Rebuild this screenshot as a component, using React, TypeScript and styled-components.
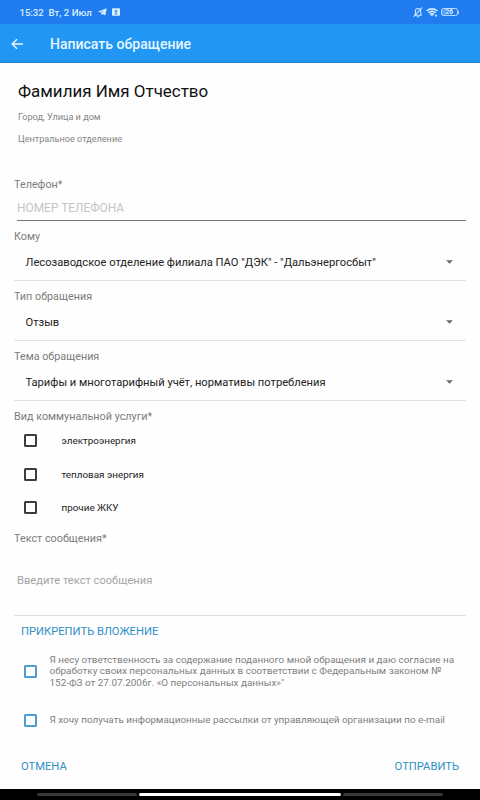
import React from "react";
import styled, { createGlobalStyle } from "styled-components";

const GlobalStyle = createGlobalStyle`
  *, *::before, *::after { box-sizing: border-box; }
  body {
    margin: 0;
    background: #fff;
    font-family: Roboto, "Noto Sans", sans-serif;
  }
  button, input, textarea { font-family: inherit; }
`;

const Screen = styled.div`
  display: flex;
  flex-direction: column;
  width: 480px;
  height: 800px;
  overflow: hidden;
  background: #fefefe;
`;

const StatusBar = styled.div`
  display: flex;
  align-items: center;
  flex: none;
  height: 24px;
  padding: 0 21px 0 19.5px;
  background: #217cf0;
  color: #d9efff;
  font-size: 9.6px;
  font-weight: 500;
`;

const Clock = styled.span`
  width: 29px;
  font-size: 9.5px;
`;

const StatusIcons = styled.div<{ $end?: boolean }>`
  display: flex;
  align-items: center;
  gap: ${(p) => (p.$end ? 3 : 5)}px;
  margin-left: ${(p) => (p.$end ? "auto" : "6px")};
  svg { display: block; }
`;

const AppBar = styled.header`
  display: flex;
  align-items: center;
  flex: none;
  height: 39px;
  padding: 1px 10px 0;
  background: #2196f3;
  border-bottom: 1px solid #2583cd;
`;

const BackButton = styled.button`
  display: flex;
  width: 40px;
  padding: 0;
  border: 0;
  background: none;
`;

const Title = styled.h1`
  margin: 0;
  color: #e6f7ff;
  font-size: 14.04px;
  font-weight: 500;
  line-height: 20px;
`;

const Profile = styled.section`
  flex: none;
  height: 111px;
  padding: 17px 18px 0;
`;

const Name = styled.div`
  margin-bottom: 5px;
  color: #111;
  font-size: 16.95px;
  line-height: 22px;
`;

const Detail = styled.div`
  color: #858585;
  font-size: 9.15px;
  line-height: 21.5px;
`;

const Form = styled.form`
  display: flex;
  flex-direction: column;
  flex: 1;
  padding: 0 14px;
`;

const Label = styled.label<{ $height?: number }>`
  display: block;
  flex: none;
  height: ${(p) => p.$height ?? 20}px;
  padding-top: 1px;
  color: #7c7c7c;
  font-size: 10.8px;
  line-height: 20px;
`;

const PhoneInput = styled.input`
  flex: none;
  height: 27px;
  margin: 0 0 5px 3px;
  padding: 1px 0 0;
  border: 0;
  border-bottom: 1px solid #777;
  background: none;
  outline: none;
  font-size: 11.93px;
  &::placeholder { color: #c5c5c5; opacity: 1; }
`;

const Select = styled.div`
  display: flex;
  align-items: center;
  justify-content: space-between;
  flex: none;
  height: 35px;
  margin-bottom: 5px;
  padding: 0 13.5px 2px 11.5px;
  border-bottom: 1px solid #e2e2e2;
  color: #222;
  font-size: 11.16px;
  svg { display: block; }
`;

const Services = styled.div`
  display: flex;
  flex-direction: column;
  flex: none;
  height: 104px;
`;

const ServiceOption = styled.label`
  display: flex;
  align-items: center;
  gap: 24.5px;
  height: 33.5px;
  padding-left: 10px;
  color: #222;
  font-size: 9.87px;
`;

const Box = styled.span<{ $accent?: boolean }>`
  flex: none;
  width: 13px;
  height: 13px;
  border: 2px solid ${(p) => (p.$accent ? "#4c9ed0" : "#3d3d3d")};
  border-radius: 1.5px;
`;

const Message = styled.textarea`
  flex: none;
  height: 67px;
  padding: 22px 3px 0;
  border: 0;
  border-bottom: 1px solid #dedede;
  background: none;
  outline: none;
  resize: none;
  font-size: 11.14px;
  line-height: 20px;
  &::placeholder { color: #a4a4a4; opacity: 1; }
`;

const TextButton = styled.button`
  flex: none;
  padding: 0;
  border: 0;
  background: none;
  color: #2f8fc4;
  font-size: 11.2px;
  line-height: 20px;
  text-align: left;
`;

const AttachRow = styled.div`
  flex: none;
  height: 32px;
  padding: 4px 7px 0;
`;

const Consent = styled.label<{ $height: number }>`
  display: flex;
  align-items: center;
  flex: none;
  gap: 12.5px;
  height: ${(p) => p.$height}px;
  padding-left: 10px;
  color: #7e7e7e;
  font-size: 9.92px;
  line-height: 11.4px;
  white-space: nowrap;
`;

const Actions = styled.div`
  display: flex;
  justify-content: space-between;
  margin-top: 11px;
  padding: 0 7px;
`;

const NavBar = styled.div`
  display: flex;
  justify-content: center;
  flex: none;
  gap: 2px;
  height: 11px;
  padding-top: 4px;
  background: #000;
`;

const NavSegment = styled.span<{ $active?: boolean }>`
  width: ${(p) => (p.$active ? 202 : 100)}px;
  height: 3px;
  border-radius: 1.5px;
  background: ${(p) => (p.$active ? "#fff" : "#383838")};
`;

const Caret = () => (
  <svg width="7" height="4" viewBox="0 0 7 4">
    <path d="M0.2 0.2h6.6L3.5 3.8z" fill="#686868" />
  </svg>
);

const BackArrow = () => (
  <svg width="14" height="12" viewBox="0 0 14 12" fill="none" stroke="#e6f7ff" strokeWidth="1.5">
    <path d="M13 6H2.4M7 1.2L2.2 6L7 10.8" />
  </svg>
);

const TelegramIcon = () => (
  <svg width="9" height="8" viewBox="0 0 9 8" fill="#d9efff">
    <path d="M8.8 0.2L7.2 7.6L4.6 5.9L3.4 7.1L3 4.9L6.2 2.2L2.2 4.5L0 3.6z" />
  </svg>
);

const BadgeIcon = () => (
  <svg width="8" height="8" viewBox="0 0 8 8">
    <rect x="0" y="0.2" width="8" height="7.6" rx="0.8" fill="#d9efff" />
    <path d="M4 1.5v4.5M2.4 3.2h3.2M2.8 6h2.4" stroke="#3587ee" strokeWidth="0.9" />
  </svg>
);

const MutedBell = () => (
  <svg width="10" height="11" viewBox="0 0 10 11" fill="none" stroke="#c5e4ff" strokeWidth="1.1" strokeLinecap="round" strokeLinejoin="round">
    <path d="M1.6 8.3h6.9L7.7 6.9V4.2C7.7 2.6 6.7 1.5 5 1.5S2.4 2.6 2.4 4.2v2.7zM4.2 9.8h1.6M8.8 0.9L1 9.3" />
  </svg>
);

const WifiIcon = () => (
  <svg width="12" height="9" viewBox="0 0 12 9" fill="none" stroke="#d0eaff" strokeWidth="1.6">
    <path d="M0.6 3C3.7 0.1 8.3 0.1 11.4 3M2.4 5C4.5 3.1 7.5 3.1 9.6 5M4.1 6.8c1.1-1 2.7-1 3.8 0" />
    <path d="M4.8 7.2h2.4L6 8.6z" fill="#d0eaff" stroke="none" />
    <path d="M9.2 7.6h1.8" />
  </svg>
);

const Battery = styled.span`
  display: flex;
  align-items: center;
`;

const BatteryLevel = styled.span`
  display: flex;
  align-items: center;
  justify-content: center;
  width: 16.5px;
  height: 8px;
  border: 1px solid #b9dcff;
  border-radius: 2.5px;
  background: linear-gradient(90deg, #5ca2f6 30%, transparent 30%);
  color: #e4f3ff;
  font-size: 6.5px;
  font-weight: 700;
  line-height: 6px;
`;

const BatteryTip = styled.span`
  width: 1.5px;
  height: 3px;
  border-radius: 0 1px 1px 0;
  background: #b9dcff;
`;

const fields = [
  { label: "Кому", value: 'Лесозаводское отделение филиала ПАО "ДЭК" - "Дальэнергосбыт"' },
  { label: "Тип обращения", value: "Отзыв" },
  { label: "Тема обращения", value: "Тарифы и многотарифный учёт, нормативы потребления" },
];

const services = ["электроэнергия", "тепловая энергия", "прочие ЖКУ"];

export default function App() {
  return (
    <>
      <GlobalStyle />
      <Screen>
        <StatusBar>
          <Clock>15:32</Clock>
          <span>Вт, 2 Июл</span>
          <StatusIcons>
            <TelegramIcon />
            <BadgeIcon />
          </StatusIcons>
          <StatusIcons $end>
            <MutedBell />
            <WifiIcon />
            <Battery>
              <BatteryLevel>26</BatteryLevel>
              <BatteryTip />
            </Battery>
          </StatusIcons>
        </StatusBar>
        <AppBar>
          <BackButton aria-label="Назад"><BackArrow /></BackButton>
          <Title>Написать обращение</Title>
        </AppBar>
        <Profile>
          <Name>Фамилия Имя Отчество</Name>
          <Detail>Город, Улица и дом</Detail>
          <Detail>Центральное отделение</Detail>
        </Profile>
        <Form>
          <Label htmlFor="phone">Телефон*</Label>
          <PhoneInput id="phone" placeholder="НОМЕР ТЕЛЕФОНА" />
          {fields.map((field) => (
            <React.Fragment key={field.label}>
              <Label as="div">{field.label}</Label>
              <Select>
                <span>{field.value}</span>
                <Caret />
              </Select>
            </React.Fragment>
          ))}
          <Label as="div" $height={18}>Вид коммунальной услуги*</Label>
          <Services>
            {services.map((service) => (
              <ServiceOption key={service}>
                <Box />
                {service}
              </ServiceOption>
            ))}
          </Services>
          <Label htmlFor="message" $height={21}>Текст сообщения*</Label>
          <Message id="message" placeholder="Введите текст сообщения" />
          <AttachRow>
            <TextButton type="button">ПРИКРЕПИТЬ ВЛОЖЕНИЕ</TextButton>
          </AttachRow>
          <Consent $height={46}>
            <Box $accent />
            <span>
              Я несу ответственность за содержание поданного мной обращения и даю согласие на
              <br />
              обработку своих персональных данных в соответствии с Федеральным законом №
              <br />
              152-ФЗ от 27.07.2006г. «О персональных данных»"
            </span>
          </Consent>
          <Consent $height={52}>
            <Box $accent />
            <span>Я хочу получать информационные рассылки от управляющей организации по e-mail</span>
          </Consent>
          <Actions>
            <TextButton type="button">ОТМЕНА</TextButton>
            <TextButton type="button">ОТПРАВИТЬ</TextButton>
          </Actions>
        </Form>
        <NavBar>
          <NavSegment />
          <NavSegment $active />
          <NavSegment />
        </NavBar>
      </Screen>
    </>
  );
}
